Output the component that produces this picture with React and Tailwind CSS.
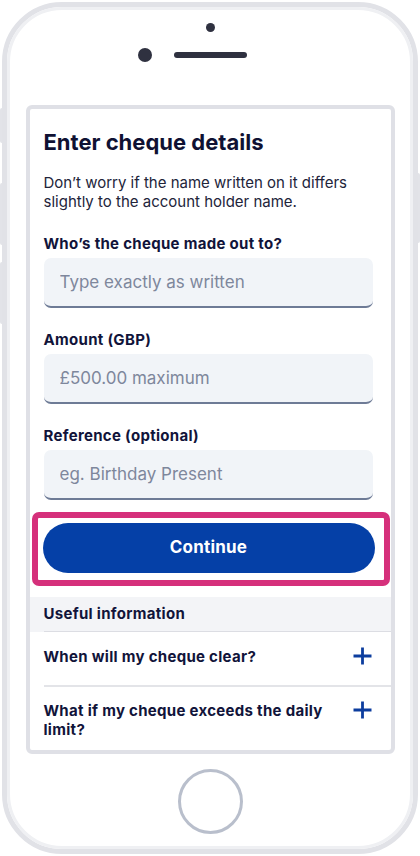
import React from "react";

function Plus() {
  return (
    <svg width="19" height="18" viewBox="0 0 19 18" className="shrink-0">
      <path d="M9.5 0.5V17.5M0.5 9H18.5" stroke="#0c3d9e" strokeWidth="2.8" fill="none" />
    </svg>
  );
}

function Field({ label, placeholder, gap }) {
  return (
    <div className={gap}>
      <div className="text-[15px] leading-[19px] font-bold text-[#11143a] tracking-[0.3px]">{label}</div>
      <input
        placeholder={placeholder}
        className="mt-[5px] w-full h-[50px] rounded-[7px] bg-[#f1f4f8] border-b-2 border-[#6e7b96] pl-[16px] text-[17px] text-[#11143a] placeholder:text-[#7e879c] outline-none"
      />
    </div>
  );
}

export default function App() {
  return (
    <div className="relative w-[420px] h-[856px] bg-white overflow-hidden p-[2px] [font-family:Inter,sans-serif]">
      {/* side buttons */}
      <div className="absolute left-0 top-[108px] w-[5px] h-[35px] rounded-l-[2px] bg-[#e2e3e8]" />
      <div className="absolute left-0 top-[183px] w-[5px] h-[62px] rounded-l-[2px] bg-[#e2e3e8]" />
      <div className="absolute left-0 top-[262px] w-[5px] h-[62px] rounded-l-[2px] bg-[#e2e3e8]" />
      <div className="absolute right-0 top-[173px] w-[5px] h-[70px] rounded-r-[2px] bg-[#e2e3e8]" />

      <div className="relative h-[852px] rounded-[60px] border-[5px] border-[#e1e2e7] bg-white">
        <div className="h-full rounded-[55px] border-[3px] border-[#eff0f3] flex flex-col items-center">
          {/* front camera */}
          <div className="mt-[13px] w-[9px] h-[9px] rounded-full bg-[#2f3140]" />
          <div className="mt-[16px] flex items-center gap-[22px]">
            <div className="w-[14px] h-[14px] rounded-full bg-[#2f3140]" />
            <div className="w-[73px] h-[6px] rounded-full bg-[#2f3140]" />
            <div className="w-[14px] h-[14px]" />
          </div>

          {/* screen */}
          <div className="mt-[43px] w-[369px] h-[649px] border-4 border-[#dfe0e6] rounded-[6px] flex flex-col overflow-hidden">
            <div className="pl-[14px] pr-[18px]">
              <h1 className="pt-[19px] text-[22px] leading-[28px] font-bold text-[#0f1133]">
                Enter cheque details
              </h1>
              <p className="mt-[17px] text-[15px] leading-[19px] text-[#22243a]">
                Don’t worry if the name written on it differs slightly to the account holder name.
              </p>
              <Field gap="mt-[23px]" label="Who’s the cheque made out to?" placeholder="Type exactly as written" />
              <Field gap="mt-[22px]" label="Amount (GBP)" placeholder="£500.00 maximum" />
              <Field gap="mt-[22px]" label="Reference (optional)" placeholder="eg. Birthday Present" />
            </div>

            <div className="mt-[12px] ml-[2px] mr-[1px] h-[74px] shrink-0 rounded-[7px] border-[6px] border-[#d5307b] pl-[5px] pr-[9px] pt-[5px]">
              <button className="w-full h-[50px] rounded-full bg-[#0540a7] text-white text-[17px] font-bold tracking-[0.2px]">
                Continue
              </button>
            </div>

            <div className="mt-[11px] bg-[#f3f4f7] pl-[14px]">
              <div className="h-[35px] flex items-center border-b border-[#dcdde3] text-[15px] font-bold text-[#11143a] tracking-[0.3px]">
                Useful information
              </div>
            </div>

            <div className="pl-[14px]">
              <div className="flex items-start justify-between border-b-2 border-[#e3e4e8] pt-[15px] pb-[19px] pr-[19px]">
                <span className="text-[15px] leading-[19px] font-bold text-[#11143a] tracking-[0.3px]">When will my cheque clear?</span>
                <Plus />
              </div>
              <div className="flex items-start justify-between pt-[14px] pb-[13px] pr-[19px] gap-[14px]">
                <span className="text-[15px] leading-[19px] font-bold text-[#11143a] tracking-[0.3px]">
                  What if my cheque exceeds the daily limit?
                </span>
                <Plus />
              </div>
            </div>
          </div>

          {/* home button */}
          <div className="mt-[15px] w-[65px] h-[65px] rounded-full border-[3px] border-[#b9bfcc]" />
        </div>
      </div>
    </div>
  );
}
